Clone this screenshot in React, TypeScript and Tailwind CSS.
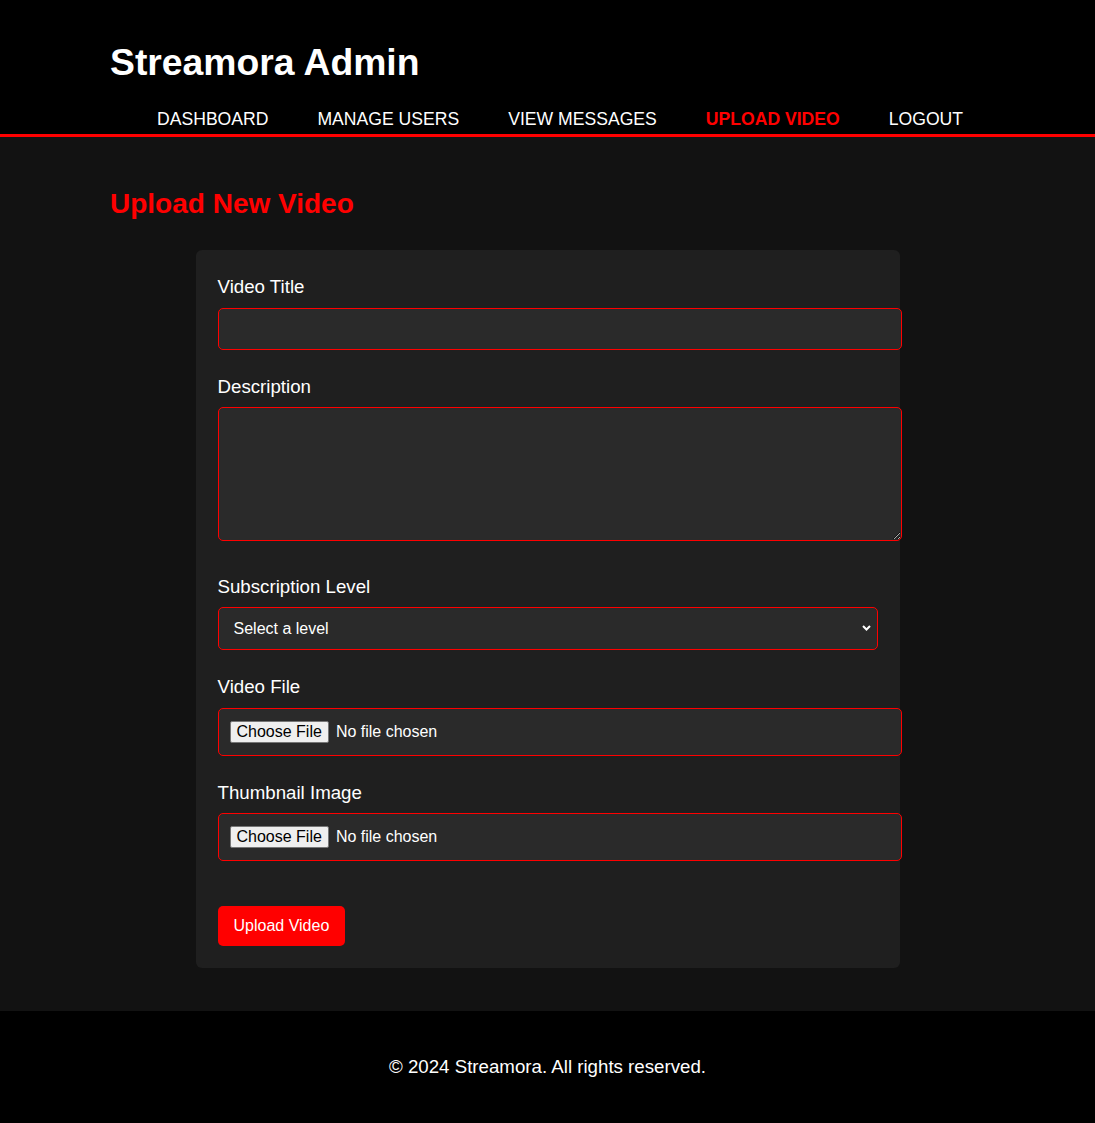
import { useState } from "react";

const navItems = ["DASHBOARD", "MANAGE USERS", "VIEW MESSAGES", "UPLOAD VIDEO", "LOGOUT"];

export default function App() {
  const [level, setLevel] = useState("");

  return (
    <div className="min-h-screen bg-[#121212] text-white font-['Liberation_Sans',Arial,sans-serif]">
      {/* Header */}
      <header className="bg-black px-[110px] pt-[41px] pb-[5px] border-b-[3px] border-[#ff0000]">
        <h1 className="text-[37.3px] leading-[42px] font-bold">Streamora Admin</h1>
        <nav className="mt-[26px] pl-[47px] flex gap-[49px] text-[17.6px] leading-[20px]">
          {navItems.map((item) => (
            <a
              key={item}
              href="#"
              className={item === "UPLOAD VIDEO" ? "text-[#ff0000] font-bold" : "text-white"}
            >
              {item}
            </a>
          ))}
        </nav>
      </header>

      {/* Main */}
      <main className="px-[110px] pt-[51px] pb-[43px]">
        <h2 className="text-[28px] leading-[32px] font-bold text-[#ff0000] mb-[30px]">Upload New Video</h2>

        <form className="w-[704px] mx-auto bg-[#1f1f1f] rounded-[6px] px-[22px] pt-[26px] pb-[22px]">
          <label className="block text-[18.7px] leading-[22px] mb-[10px]">Video Title</label>
          <input
            type="text"
            className="block w-[684px] h-[42px] px-[10px] bg-[#2a2a2a] border border-[#ff0000] rounded-[5px] text-[16px] text-white outline-none"
          />

          <label className="block text-[18.7px] leading-[22px] mt-[26px] mb-[9px]">Description</label>
          <textarea className="block w-[684px] h-[134px] px-[10px] py-[10px] bg-[#2a2a2a] border border-[#ff0000] rounded-[5px] text-[16px] text-white outline-none" />

          <label className="block text-[18.7px] leading-[22px] mt-[35px] mb-[9px]">Subscription Level</label>
          <div className="relative w-[660px]">
            <select
              value={level}
              onChange={(e) => setLevel(e.target.value)}
              className="block w-[660px] h-[43px] pl-[15px] appearance-none bg-[#2a2a2a] border border-[#ff0000] rounded-[5px] text-[16px] text-white outline-none"
            >
              <option value="">Select a level</option>
              <option value="basic">Basic</option>
              <option value="standard">Standard</option>
              <option value="premium">Premium</option>
            </select>
            <svg
              className="absolute right-[7px] top-[18px] pointer-events-none"
              width="9"
              height="6"
              viewBox="0 0 9 6"
              fill="none"
            >
              <path d="M1 1 L4.5 4.5 L8 1" stroke="white" strokeWidth="2" />
            </svg>
          </div>

          <label className="block text-[18.7px] leading-[22px] mt-[26px] mb-[10px]">Video File</label>
          <input
            type="file"
            className="block w-[684px] px-[11px] py-[12px] bg-[#2a2a2a] border border-[#ff0000] rounded-[5px] text-[16px] leading-[18px] text-white file:bg-[#efefef] file:text-black file:border file:border-[#767676] file:rounded-[2px] file:px-[6px] file:py-[1px] file:mr-[7px]"
          />

          <label className="block text-[18.7px] leading-[22px] mt-[26px] mb-[9px]">Thumbnail Image</label>
          <input
            type="file"
            className="block w-[684px] px-[11px] py-[12px] bg-[#2a2a2a] border border-[#ff0000] rounded-[5px] text-[16px] leading-[18px] text-white file:bg-[#efefef] file:text-black file:border file:border-[#767676] file:rounded-[2px] file:px-[6px] file:py-[1px] file:mr-[7px]"
          />

          <button
            type="submit"
            className="mt-[45px] h-[40px] px-[16px] bg-[#ff0000] rounded-[5px] text-[16px] text-white"
          >
            Upload Video
          </button>
        </form>
      </main>

      {/* Footer */}
      <footer className="bg-black pt-[45px] pb-[46px] text-center text-[18.7px] leading-[21px]">
        © 2024 Streamora. All rights reserved.
      </footer>
    </div>
  );
}
